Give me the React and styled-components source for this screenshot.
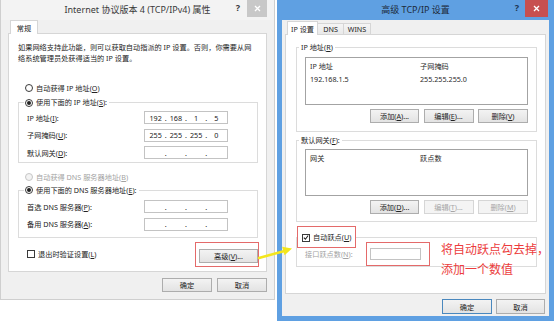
import React from 'react';
import styled, { createGlobalStyle, css } from 'styled-components';

const GlobalStyle = createGlobalStyle`
	html, body {
		margin: 0;
		padding: 0;
		background: #fff;
	}
	body {
		font-family: "Noto Sans", "Noto Sans CJK SC", sans-serif;
		font-size: 7.2px;
		color: #222;
	}
	* {
		box-sizing: border-box;
	}
`;

const Page = styled.div`
	position: relative;
	width: 554px;
	height: 321px;
	overflow: hidden;
	display: flex;
	align-items: flex-start;
	gap: 2px;
`;

const Window = styled.div`
	display: flex;
	flex-direction: column;
	flex: none;
	width: ${(p) => p.$w}px;
	height: ${(p) => p.$h}px;
	background: #f0f0f0;
	${(p) =>
		p.$active
			? css`
					border: 5px solid #5fa0e2;
					border-top: none;
			  `
			: css`
					border: 1px solid #cfcfcf;
					border-top: none;
			  `}
`;

const TitleBar = styled.div`
	flex: none;
	height: 20px;
	display: grid;
	grid-template-columns: 1fr auto 1fr;
	align-items: start;
	background: ${(p) => (p.$active ? '#5fa0e2' : '#f3f3f3')};
`;

const Title = styled.div`
	grid-column: 2;
	font-family: "Noto Sans", "Noto Sans CJK SC", sans-serif;
	font-size: 9px;
	line-height: 19px;
	color: ${(p) => (p.$active ? '#1d2a3a' : '#3a3a3a')};
	white-space: nowrap;
`;

const Controls = styled.div`
	grid-column: 3;
	justify-self: end;
	display: flex;
	align-items: flex-start;
	gap: ${(p) => p.$gap}px;
	margin-right: ${(p) => p.$mr}px;
`;

const Help = styled.span`
	font-size: 9px;
	font-weight: 700;
	line-height: 16px;
	color: ${(p) => (p.$active ? '#1b3552' : '#3a3a3a')};
`;

const CloseBtn = styled.div`
	width: ${(p) => p.$w}px;
	height: 17px;
	display: flex;
	align-items: center;
	justify-content: center;
	background: ${(p) => (p.$active ? '#c75050' : '#c8c8c8')};
`;

const Body = styled.div`
	flex: 1;
	display: flex;
	flex-direction: column;
	padding: ${(p) => p.$pad};
`;

const TabStrip = styled.div`
	display: flex;
	align-items: flex-end;
	height: ${(p) => p.$h}px;
	padding-left: 2px;
`;

const Tab = styled.div`
	position: relative;
	z-index: 1;
	width: ${(p) => p.$w}px;
	height: ${(p) => (p.$active ? p.$h + 1 : p.$h - 2)}px;
	margin-bottom: ${(p) => (p.$active ? -1 : 0)}px;
	margin-right: -1px;
	display: flex;
	align-items: center;
	justify-content: center;
	border: 1px solid #d6d6d6;
	border-bottom: none;
	background: ${(p) => (p.$active ? '#fff' : 'linear-gradient(#f5f5f5, #e9e9e9)')};
	color: #222;
	white-space: nowrap;
`;

const Panel = styled.div`
	height: ${(p) => p.$h}px;
	flex: none;
	display: flex;
	flex-direction: column;
	background: #fff;
	border: 1px solid #d6d6d6;
	padding: ${(p) => p.$pad};
`;

const Desc = styled.p`
	margin: 0;
	line-height: 10.5px;
	white-space: nowrap;
`;

const Choice = styled.div`
	display: flex;
	align-items: center;
	gap: 3px;
	height: 13px;
	margin: ${(p) => p.$m || 0};
	color: ${(p) => (p.$disabled ? '#a2a2a2' : '#222')};
	white-space: nowrap;
`;

const Radio = styled.span`
	flex: none;
	width: 8px;
	height: 8px;
	border-radius: 50%;
	border: 1px solid ${(p) => (p.$disabled ? '#c6c6c6' : '#3a3a3a')};
	background: ${(p) => (p.$disabled ? '#f3f3f3' : '#fff')};
	display: flex;
	align-items: center;
	justify-content: center;
	&::after {
		content: '';
		display: ${(p) => (p.$on ? 'block' : 'none')};
		width: 4px;
		height: 4px;
		border-radius: 50%;
		background: #222;
	}
`;

const Check = styled.span`
	flex: none;
	width: 8px;
	height: 8px;
	border: 1px solid #3a3a3a;
	background: #fff;
	display: flex;
	align-items: center;
	justify-content: center;
`;

const Group = styled.fieldset`
	margin: ${(p) => p.$m};
	padding: 0;
	min-width: 0;
	border: 1px solid #dcdcdc;
`;

const Legend = styled.legend`
	margin-left: ${(p) => p.$ml}px;
	padding: ${(p) => p.$pad || '0 2px'};
	line-height: 11px;
	white-space: nowrap;
`;

const GroupBody = styled.div`
	display: flex;
	flex-direction: column;
	gap: ${(p) => p.$gap || 0}px;
	padding: ${(p) => p.$pad};
`;

const FieldRow = styled.div`
	display: flex;
	align-items: center;
	margin: ${(p) => p.$m || 0};
`;

const FieldLabel = styled.span`
	flex: none;
	width: ${(p) => p.$w}px;
	color: ${(p) => (p.$disabled ? '#a2a2a2' : '#222')};
	white-space: nowrap;
`;

const IpBox = styled.div`
	flex: none;
	width: ${(p) => p.$w}px;
	height: ${(p) => p.$h || 13}px;
	display: flex;
	align-items: center;
	padding: 0 2px;
	background: #fff;
	border: 1px solid ${(p) => (p.$disabled ? '#dedede' : '#c3c3c3')};
`;

const Octet = styled.span`
	flex: 1;
	text-align: center;
`;

const Dot = styled.span`
	width: 3px;
	text-align: center;
`;

const FootRow = styled.div`
	display: flex;
	align-items: center;
	justify-content: space-between;
	margin: ${(p) => p.$m};
	padding: ${(p) => p.$pad};
`;

const Mark = styled.div`
	flex: none;
	display: flex;
	align-items: center;
	gap: 3px;
	padding: ${(p) => p.$pad};
	border: 1px solid #e46a6a;
`;

const ButtonRow = styled.div`
	display: flex;
	justify-content: flex-end;
	gap: ${(p) => p.$gap}px;
	margin: ${(p) => p.$m};
`;

const Button = styled.div`
	flex: none;
	width: ${(p) => p.$w || 50}px;
	height: ${(p) => p.$h || 15}px;
	display: flex;
	align-items: center;
	justify-content: center;
	white-space: nowrap;
	color: ${(p) => (p.$disabled ? '#a6a6a6' : '#222')};
	background: ${(p) => (p.$disabled ? '#f4f4f4' : 'linear-gradient(#f3f3f3, #e3e3e3)')};
	border: 1px solid
		${(p) => (p.$disabled ? '#d6d6d6' : p.$default ? '#4a88be' : '#adadad')};
`;

const ListBox = styled.div`
	height: ${(p) => p.$h}px;
	background: #fff;
	border: 1px solid #a3a3a3;
	padding-top: 1px;
`;

const ListRow = styled.div`
	display: grid;
	grid-template-columns: 110px 1fr;
	height: ${(p) => p.$h}px;
	align-items: center;
	padding-left: 4px;
	color: #2a2a2a;
`;

const Note = styled.div`
	position: absolute;
	left: 441px;
	top: 239px;
	font-family: "Noto Sans CJK SC", sans-serif;
	font-size: 12px;
	line-height: 20px;
	color: #ec3d3d;
	white-space: nowrap;
`;

const Arrow = styled.svg`
	position: absolute;
	left: 255px;
	top: 240px;
`;

const CloseIcon = () => (
	<svg width="7" height="7" viewBox="0 0 7 7">
		<path d="M1 1L6 6M6 1L1 6" stroke="#fff" strokeWidth="1.3" />
	</svg>
);

const TickIcon = () => (
	<svg width="7" height="7" viewBox="0 0 7 7">
		<path d="M1 3.6L2.8 5.5L6 1.2" stroke="#222" strokeWidth="1.3" fill="none" />
	</svg>
);

const Ip = ({ parts = ['', '', '', ''], w = 84, h, disabled }) => (
	<IpBox $w={w} $h={h} $disabled={disabled}>
		{parts.map((part, i) => (
			<React.Fragment key={i}>
				<Octet>{part}</Octet>
				{i < 3 && <Dot>.</Dot>}
			</React.Fragment>
		))}
	</IpBox>
);

const App = () => {
	return (
		<Page>
			<GlobalStyle />

			<Window $w={275} $h={300}>
				<TitleBar>
					<Title>Internet 协议版本 4 (TCP/IPv4) 属性</Title>
					<Controls $gap={7} $mr={7}>
						<Help>?</Help>
						<CloseBtn $w={20}>
							<CloseIcon />
						</CloseBtn>
					</Controls>
				</TitleBar>
				<Body $pad="0 7px 0 7px">
					<TabStrip $h={13}>
						<Tab $active $w={28} $h={13}>
							常规
						</Tab>
					</TabStrip>
					<Panel $h={239} $pad="8px 0 0 9px">
						<Desc>
							如果网络支持此功能，则可以获取自动指派的 IP 设置。否则，你需要从网
							<br />
							络系统管理员处获得适当的 IP 设置。
						</Desc>
						<Choice $m="18px 0 0 7px">
							<Radio />
							<span>
								自动获得 IP 地址(<u>O</u>)
							</span>
						</Choice>
						<Group $m="2px 8px 0 0">
							<Legend $ml={5} $pad="0 2px 0 1px">
								<Choice>
									<Radio $on />
									<span>
										使用下面的 IP 地址(<u>S</u>):
									</span>
								</Choice>
							</Legend>
							<GroupBody $pad="2px 0 3px 8px" $gap={4.5}>
								<FieldRow>
									<FieldLabel $w={117}>
										IP 地址(<u>I</u>):
									</FieldLabel>
									<Ip parts={['192', '168', '1', '5']} />
								</FieldRow>
								<FieldRow>
									<FieldLabel $w={117}>
										子网掩码(<u>U</u>):
									</FieldLabel>
									<Ip parts={['255', '255', '255', '0']} />
								</FieldRow>
								<FieldRow>
									<FieldLabel $w={117}>
										默认网关(<u>D</u>):
									</FieldLabel>
									<Ip />
								</FieldRow>
							</GroupBody>
						</Group>
						<Choice $m="7.5px 0 0 7px" $disabled>
							<Radio $disabled />
							<span>
								自动获得 DNS 服务器地址(<u>B</u>)
							</span>
						</Choice>
						<Group $m="0 8px 0 0">
							<Legend $ml={5} $pad="0 2px 0 1px">
								<Choice>
									<Radio $on />
									<span>
										使用下面的 DNS 服务器地址(<u>E</u>):
									</span>
								</Choice>
							</Legend>
							<GroupBody $pad="3.5px 0 6px 8px" $gap={4.5}>
								<FieldRow>
									<FieldLabel $w={117}>
										首选 DNS 服务器(<u>P</u>):
									</FieldLabel>
									<Ip />
								</FieldRow>
								<FieldRow>
									<FieldLabel $w={117}>
										备用 DNS 服务器(<u>A</u>):
									</FieldLabel>
									<Ip />
								</FieldRow>
							</GroupBody>
						</Group>
						<FootRow $m="4px 0 0 0" $pad="0 7px 0 9px">
							<Choice>
								<Check />
								<span>
									退出时验证设置(<u>L</u>)
								</span>
							</Choice>
							<Mark $pad="6px 0 3px 3px">
								<Button $w={59} $h={14}>
									高级(<u>V</u>)...
								</Button>
							</Mark>
						</FootRow>
					</Panel>
					<ButtonRow $gap={5} $m="6px 0 0 0">
						<Button $h={14}>确定</Button>
						<Button $h={14}>取消</Button>
					</ButtonRow>
				</Body>
			</Window>

			<Window $active $w={277} $h={321}>
				<TitleBar $active>
					<Title $active>高级 TCP/IP 设置</Title>
					<Controls $gap={6} $mr={1}>
						<Help $active>?</Help>
						<CloseBtn $active $w={23}>
							<CloseIcon />
						</CloseBtn>
					</Controls>
				</TitleBar>
				<Body $pad="1px 3px 2px 3px">
					<TabStrip $h={13}>
						<Tab $active $w={31} $h={13}>
							IP 设置
						</Tab>
						<Tab $w={27} $h={13}>
							DNS
						</Tab>
						<Tab $w={28} $h={13}>
							WINS
						</Tab>
					</TabStrip>
					<Panel $h={260} $pad="6.5px 8px 0 10px">
						<Group $m="0">
							<Legend $ml={2}>
								IP 地址(<u>R</u>)
							</Legend>
							<GroupBody $pad="4.5px 8px 8px 8px">
								<ListBox $h={48}>
									<ListRow $h={13}>
										<span>IP 地址</span>
										<span>子网掩码</span>
									</ListRow>
									<ListRow $h={14}>
										<span>192.168.1.5</span>
										<span>255.255.255.0</span>
									</ListRow>
								</ListBox>
								<ButtonRow $gap={4.5} $m="4px 0 0 0">
									<Button $w={49} $h={14}>
										添加(<u>A</u>)...
									</Button>
									<Button $w={50} $h={14}>
										编辑(<u>E</u>)...
									</Button>
									<Button $w={50} $h={14}>
										删除(<u>V</u>)
									</Button>
								</ButtonRow>
							</GroupBody>
						</Group>
						<Group $m="2.5px 0 0 0">
							<Legend $ml={2}>
								默认网关(<u>F</u>):
							</Legend>
							<GroupBody $pad="3.5px 8px 7px 8px">
								<ListBox $h={47}>
									<ListRow $h={13}>
										<span>网关</span>
										<span>跃点数</span>
									</ListRow>
								</ListBox>
								<ButtonRow $gap={4.5} $m="4px 0 0 0">
									<Button $w={49} $h={14}>
										添加(<u>D</u>)...
									</Button>
									<Button $w={50} $h={14} $disabled>
										编辑(<u>T</u>)...
									</Button>
									<Button $w={50} $h={14} $disabled>
										删除(<u>M</u>)
									</Button>
								</ButtonRow>
							</GroupBody>
						</Group>
						<Group $m="4px 0 0 0">
							<Legend $ml={0} $pad="0">
								<Mark $pad="5px 4px 4px 4px">
									<Check>
										<TickIcon />
									</Check>
									<span>
										自动跃点(<u>U</u>)
									</span>
								</Mark>
							</Legend>
							<GroupBody $pad="0 0 0 8px">
								<FieldRow $m="-6px 0 0 0">
									<FieldLabel $w={61} $disabled>
										接口跃点数(<u>N</u>):
									</FieldLabel>
									<Mark $pad="5px 8px 5px 3px">
										<IpBox $w={51} $h={12} />
									</Mark>
								</FieldRow>
							</GroupBody>
						</Group>
					</Panel>
					<ButtonRow $gap={4} $m="5px 1px 0 0">
						<Button $default $w={50} $h={15}>
							确定
						</Button>
						<Button $w={49} $h={15}>
							取消
						</Button>
					</ButtonRow>
				</Body>
			</Window>

			<Arrow width="40" height="24" viewBox="0 0 40 24">
				<path d="M4 18L29.5 10.9" stroke="#f4e61c" strokeWidth="2.6" strokeLinecap="round" />
				<polygon points="37,8.5 27.1,6.7 29.6,15.3" fill="#f4e61c" />
			</Arrow>

			<Note>
				将自动跃点勾去掉，
				<br />
				添加一个数值
			</Note>
		</Page>
	);
};

export default App;
